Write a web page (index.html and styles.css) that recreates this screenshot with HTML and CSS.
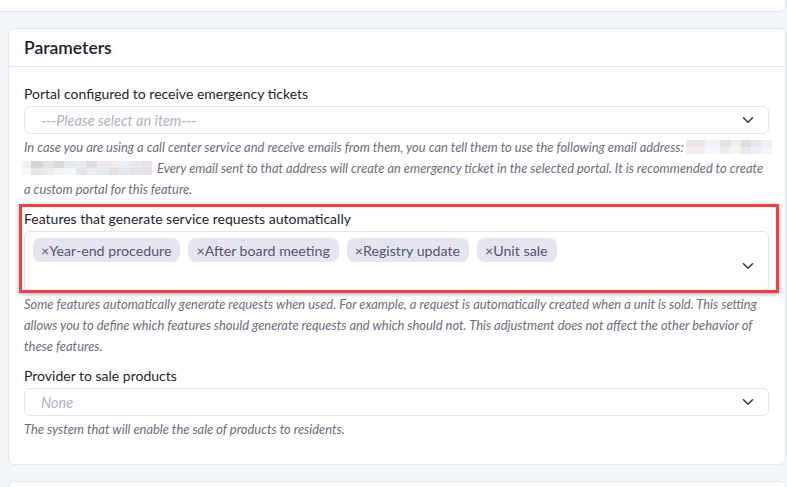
FILE: index.html
```html
<!DOCTYPE html>
<html>
<head>
<meta charset="utf-8">
<link rel="stylesheet" href="styles.css">
</head>
<body>
<div class="top-card"></div>
<section class="card">
  <header class="card-head">Parameters</header>
  <div class="card-body">
    <div class="field">
      <label class="label">Portal configured to receive emergency tickets</label>
      <div class="select">
        <span class="placeholder">---Please select an item---</span>
        <svg class="chev" width="12" height="8" viewBox="0 0 12 8"><path d="M1.5 1.8 6 6.2 10.5 1.8" fill="none" stroke="#3a3a48" stroke-width="1.6" stroke-linecap="round" stroke-linejoin="round"/></svg>
      </div>
      <p class="help">In case you are using a call center service and receive emails from them, you can tell them to use the following email address:<span class="blur b1"></span> <span class="blur b2"></span> Every email sent to that address will create an emergency ticket in the selected portal. It is recommended to create a custom portal for this feature.</p>
    </div>
    <div class="field highlighted">
      <label class="label">Features that generate service requests automatically</label>
      <div class="select multi">
        <div class="tags">
          <span class="tag">×Year-end procedure</span>
          <span class="tag">×After board meeting</span>
          <span class="tag">×Registry update</span>
          <span class="tag">×Unit sale</span>
        </div>
        <svg class="chev" width="12" height="8" viewBox="0 0 12 8"><path d="M1.5 1.8 6 6.2 10.5 1.8" fill="none" stroke="#3a3a48" stroke-width="1.6" stroke-linecap="round" stroke-linejoin="round"/></svg>
      </div>
      <div class="annot"></div>
      <p class="help">Some features automatically generate requests when used. For example, a request is automatically created when a unit is sold. This setting allows you to define which features should generate requests and which should not. This adjustment does not affect the other behavior of these features.</p>
    </div>
    <div class="field">
      <label class="label">Provider to sale products</label>
      <div class="select">
        <span class="placeholder">None</span>
        <svg class="chev" width="12" height="8" viewBox="0 0 12 8"><path d="M1.5 1.8 6 6.2 10.5 1.8" fill="none" stroke="#3a3a48" stroke-width="1.6" stroke-linecap="round" stroke-linejoin="round"/></svg>
      </div>
      <p class="help">The system that will enable the sale of products to residents.</p>
    </div>
  </div>
</section>
<section class="card next"></section>
</body>
</html>
```
FILE: styles.css
```css
* { box-sizing: border-box; }
html, body { margin: 0; padding: 0; }
body {
  background: #f3f6f9;
  font-family: Lato, "Liberation Sans", sans-serif;
  color: #1e1e2d;
  width: 787px;
  height: 487px;
  overflow: hidden;
}
.top-card {
  height: 12px;
  width: 786px;
  background: #fff;
  border-bottom: 1px solid #e4e8ee;
  border-right: 1px solid #e4e8ee;
  border-bottom-right-radius: 6px;
}
.card {
  margin: 16px 0 0 8px;
  width: 778px;
  background: #fff;
  border: 1px solid #e4e7ec;
  border-radius: 6px;
}
.card.next {
  height: 6px;
  margin-top: 16px;
  border-bottom: 0;
  border-radius: 6px 6px 0 0;
}
.card-head {
  height: 38px;
  padding: 0 15px;
  display: flex;
  align-items: center;
  font-size: 17.5px;
  font-weight: 600;
  color: #1c1c2e;
  border-bottom: 1px solid #e6e8ee;
}
.card-body {
  padding: 17px 16px 24px 15px;
  display: flex;
  flex-direction: column;
  gap: 9px;
}
.field { position: relative; }
.label {
  display: block;
  font-size: 14px;
  line-height: 20px;
  margin-bottom: 2px;
  color: #1e1e2d;
}
.select {
  height: 28px;
  border: 1px solid #e3e2ee;
  border-radius: 6px;
  display: flex;
  align-items: center;
  justify-content: space-between;
  padding: 0 14px 0 16px;
  background: #fff;
}
.placeholder {
  font-style: italic;
  font-size: 14.5px;
  color: #b3b0c1;
}
.chev { display: block; flex: none; }
.select.multi {
  height: 60px;
  align-items: flex-start;
  padding: 6px 14px 0 8px;
}
.select.multi .chev { margin-top: 24px; }
.tags { display: flex; gap: 8px; flex-wrap: wrap; }
.tag {
  height: 24px;
  display: inline-flex;
  align-items: center;
  padding: 0 9px 0 8px;
  background: #e4e5ef;
  border-radius: 8px;
  font-size: 14.2px;
  color: #57546c;
}
.help {
  margin: 3px 0 0;
  font-size: 12.9px;
  line-height: 21px;
  font-style: italic;
  color: #6d6d7c;
}
.blur {
  display: inline-block;
  height: 14px;
  vertical-align: -2px;
  background-repeat: no-repeat;
  background-size: 100% 50%;
  background-position: 0 0, 0 100%;
}
.blur.b1 {
  width: 86px;
  margin-left: 2px;
  margin-right: -16px;
  background-image:
    linear-gradient(90deg, #ebe7e5 0 22%, #edf3f6 22% 40%, #e2e3e6 40% 52%, #efefeb 52% 64%, #dcdde2 64% 76%, #e6e8ec 76% 88%, #eef1f4 88% 100%),
    linear-gradient(90deg, #f1f0ef 0 22%, #f4f7f9 22% 40%, #ecedef 40% 52%, #f4f4f1 52% 64%, #e8e9ed 64% 76%, #eef0f3 76% 88%, #f3f5f7 88% 100%);
}
.blur.b2 {
  width: 131px;
  margin-left: -3px;
  margin-right: 2px;
  background-image:
    linear-gradient(90deg, #eef3f6 0 8%, #d7d4d1 8% 17%, #e1e3e5 17% 25%, #d9d8d9 25% 33%, #e2e8f0 33% 42%, #f1e9ea 42% 50%, #d9dee8 50% 58%, #efeae9 58% 67%, #f2eaea 67% 75%, #e7eef5 75% 83%, #eceae9 83% 92%, #eae5e2 92% 100%),
    linear-gradient(90deg, #f7f8f8 0 8%, #e6e6e6 8% 17%, #e9ebed 17% 25%, #f3f3f1 25% 33%, #f6f7f5 33% 42%, #e4e3e9 42% 50%, #e9ecf0 50% 58%, #e6eaf0 58% 67%, #e2e1e6 67% 75%, #e9e9ec 75% 83%, #e4e4e8 83% 92%, #dfe3ee 92% 100%);
}
.annot {
  position: absolute;
  left: -5px;
  top: -5px;
  width: 760px;
  height: 89px;
  border: 3px solid #f0404a;
  box-shadow: 0 1px 4px rgba(0,0,0,0.35), inset 0 0 2px rgba(0,0,0,0.15);
  pointer-events: none;
}
```
